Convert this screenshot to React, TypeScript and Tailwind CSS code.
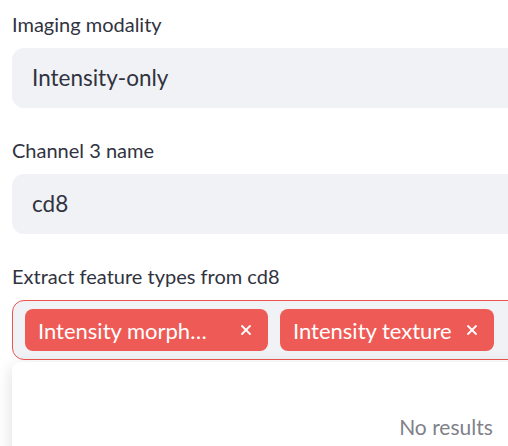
import { X } from "lucide-react";

const font = { fontFamily: '"Source Sans Pro", Lato, "Noto Sans", sans-serif' };

function Label({ children }: { children: React.ReactNode }) {
  return (
    <div className="flex h-[36px] items-center mb-[6px] text-[20px] text-[#31333f]">
      {children}
    </div>
  );
}

function TextBox({ value }: { value: string }) {
  return (
    <div className="h-[60px] rounded-xl bg-[#f0f2f6] flex items-center pl-5 text-[22.5px] text-[#31333f]">
      {value}
    </div>
  );
}

function Tag({ label, width }: { label: string; width: string }) {
  return (
    <div className={`flex h-[42px] items-center justify-between rounded-lg bg-[#ee5b56] pl-[13px] pr-[14px] text-[22px] text-white ${width}`}>
      <span className="whitespace-nowrap">{label}</span>
      <X className="ml-3 h-4 w-4 shrink-0" strokeWidth={2.75} />
    </div>
  );
}

export default function App() {
  return (
    <div className="w-[508px] h-[446px] overflow-hidden bg-white" style={font}>
      <div className="w-[880px] pl-3 pt-[6px] flex flex-col">
        <Label>Imaging modality</Label>
        <TextBox value="Intensity-only" />

        <div className="mt-6">
          <Label>Channel 3 name</Label>
          <TextBox value="cd8" />
        </div>

        <div className="mt-6">
          <Label>Extract feature types from cd8</Label>
          <div className="h-[60px] rounded-xl border-[1.5px] border-[#ec5450] bg-[#f0f2f6] flex items-center gap-3 pl-3">
            {/* first tag is clipped by the widget, ellipsis shown as in the app */}
            <Tag label="Intensity morph…" width="w-[243px]" />
            <Tag label="Intensity texture" width="w-[214px]" />
          </div>
          <div className="mt-[2px] h-[120px] rounded-lg bg-white shadow-[0_4px_16px_rgba(0,0,0,0.14)] flex items-center justify-center pt-[10px]">
            <span className="text-[21px] text-[#808189]">No results</span>
          </div>
        </div>
      </div>
    </div>
  );
}
